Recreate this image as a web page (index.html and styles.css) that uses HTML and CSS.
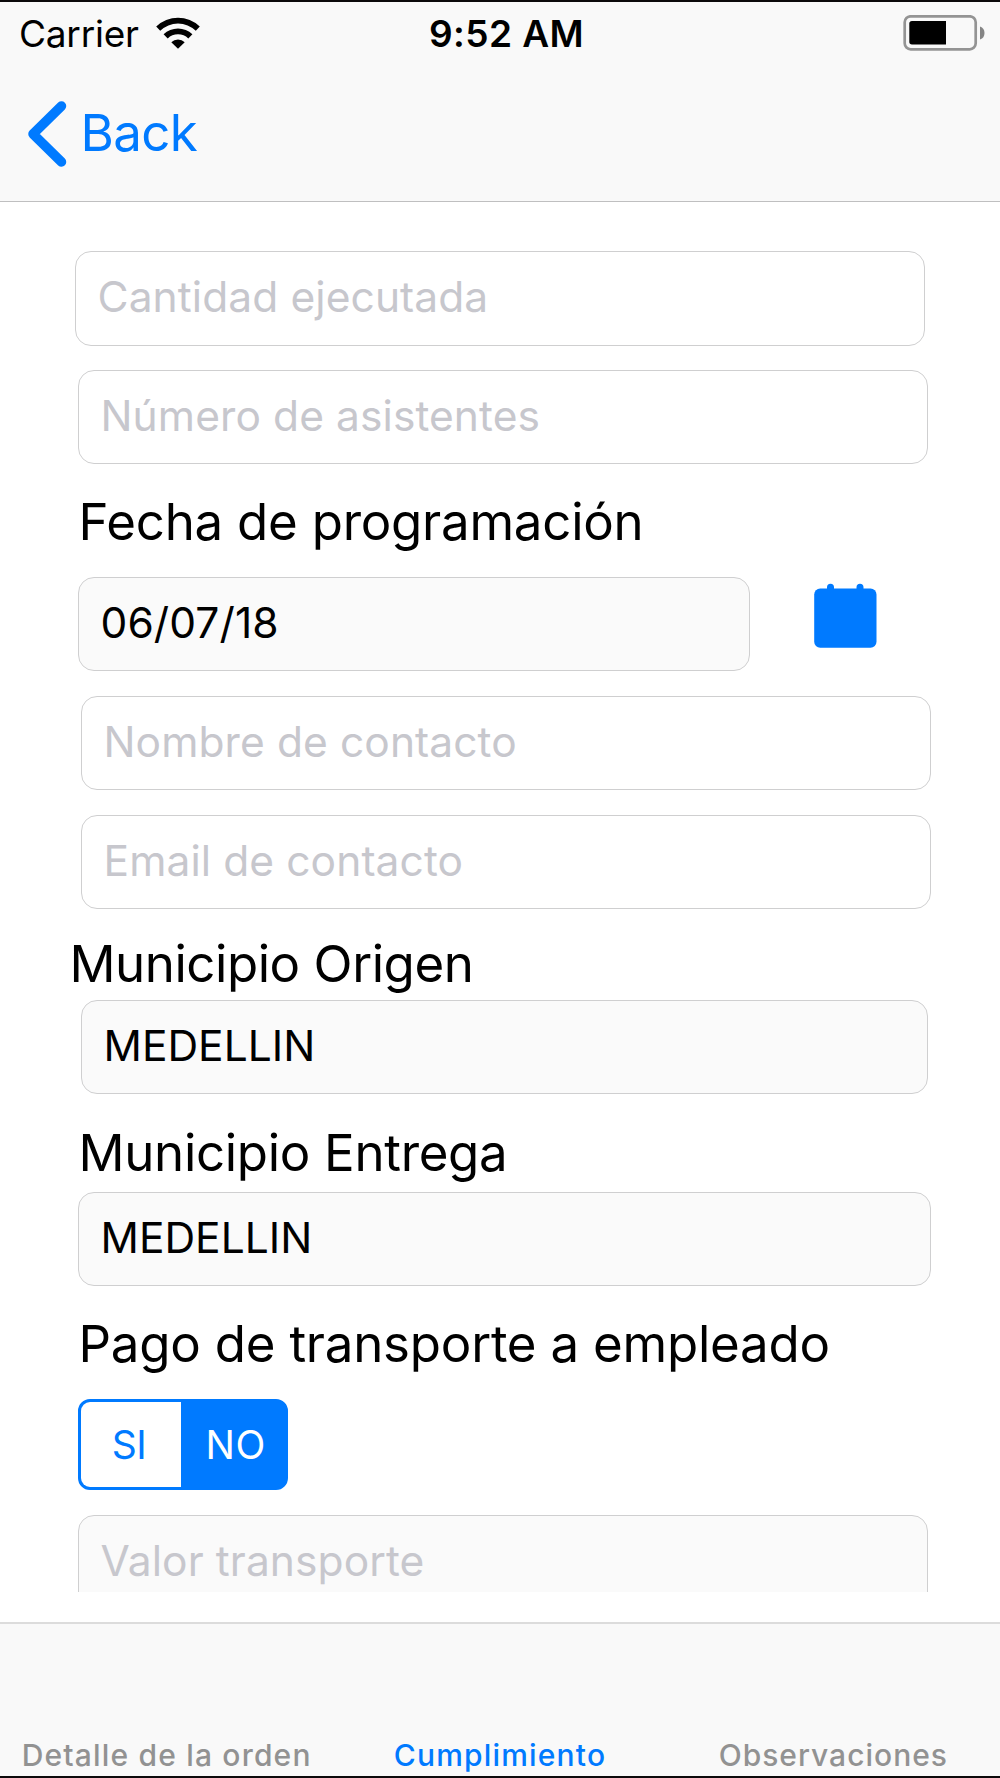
FILE: index.html
```html
<!DOCTYPE html>
<html lang="es">
<head>
<meta charset="utf-8">
<title>Cumplimiento</title>
<link rel="stylesheet" href="styles.css">
</head>
<body>
<div class="screen">
  <header class="top">
    <div class="status">
      <div class="status-left">
        <span class="carrier">Carrier</span>
        <svg class="wifi" width="44" height="32" viewBox="0 0 44 32">
          <path d="M22 31.800 15.300 25.200A9.500 9.500 0 0 1 28.700 25.200Z"/>
          <path d="M7.600 17.300A20.700 20.700 0 0 1 36.400 17.300L32.300 21.500A14.700 14.700 0 0 0 11.700 21.500Z"/>
          <path d="M.2 9.600A31.500 31.500 0 0 1 43.800 9.600L39.800 13.800A25.500 25.500 0 0 0 4.200 13.800Z"/>
        </svg>
      </div>
      <span class="time">9:52 AM</span>
      <svg class="battery" width="82" height="36" viewBox="0 0 82 36">
        <rect class="shell" x="1.700" y="1.300" width="71" height="33" rx="6"/>
        <path d="M9 6H43V29.500H9Q6.300 29.500 6.300 26.800V8.700Q6.300 6 9 6Z"/>
        <path class="nub" d="M77 11.500Q81.500 13 81.500 18T77 24.500Z"/>
      </svg>
    </div>
    <div class="nav">
      <svg class="chevron" width="40" height="66" viewBox="0 0 40 66"><path d="M34.500 5 6 33 34.500 61"/></svg>
      <span class="back">Back</span>
    </div>
  </header>

  <main class="form">
    <div class="field cantidad">Cantidad ejecutada</div>
    <div class="field asistentes">Número de asistentes</div>
    <div class="label fecha">Fecha de programación</div>
    <div class="date-row">
      <div class="field filled date">06/07/18</div>
      <svg class="calendar" width="64" height="66" viewBox="0 0 64 66">
        <rect x="1.200" y="5.500" width="62.300" height="59.300" rx="6"/>
        <path d="M14 7V4.300A3.500 3.500 0 0 1 21 4.300V7ZM43.500 7V4.300A3.500 3.500 0 0 1 50.500 4.300V7Z"/>
      </svg>
    </div>
    <div class="field nombre">Nombre de contacto</div>
    <div class="field email">Email de contacto</div>
    <div class="label origen">Municipio Origen</div>
    <div class="field filled ciudad-origen">MEDELLIN</div>
    <div class="label entrega">Municipio Entrega</div>
    <div class="field filled ciudad-entrega">MEDELLIN</div>
    <div class="label pago">Pago de transporte a empleado</div>
    <div class="segmented"><span class="option">SI</span><span class="option selected">NO</span></div>
    <div class="field disabled">Valor transporte</div>
  </main>

  <nav class="tabs">
    <span class="tab">Detalle de la orden</span>
    <span class="tab active">Cumplimiento</span>
    <span class="tab last">Observaciones</span>
  </nav>
</div>
</body>
</html>
```
FILE: styles.css
```css
* { box-sizing: border-box; }

body {
  margin: 0;
  font-family: Inter, "Liberation Sans", sans-serif;
  color: #000;
}

.screen {
  display: flex;
  flex-direction: column;
  width: 1000px;
  height: 1778px;
  overflow: hidden;
  background: #fff;
  border-top: 2px solid #0c0a0b;
  border-bottom: 2px solid #0c0a0b;
}

svg { display: block; flex: none; }

/* Status and navigation bars */
.top {
  flex: none;
  height: 200px;
  background: #f9f9f9;
  border-bottom: 1px solid #bfbfc0;
}

.status {
  display: grid;
  grid-template-columns: 410px auto 1fr;
  padding: 10px 15px 0 19px;
  font-size: 37px;
  line-height: 44px;
  white-space: nowrap;
}

.status-left { display: flex; gap: 17.5px; }
.carrier { letter-spacing: -0.225px; }
.wifi { margin-top: 5px; }
.time { font-weight: 600; letter-spacing: 0.41px; }
.battery { justify-self: end; margin-top: 3px; }
.shell { fill: none; stroke: #949494; stroke-width: 2.7; }
.nub { fill: #858585; }

.nav {
  display: flex;
  padding: 46px 0 0 26.5px;
  color: #007aff;
}

.chevron { margin-top: -1px; }

.chevron path {
  fill: none;
  stroke: #007aff;
  stroke-width: 9.5;
  stroke-linecap: round;
  stroke-linejoin: round;
}

.back {
  margin: 1px 0 0 14px;
  font-size: 51px;
  line-height: 60px;
  letter-spacing: -0.6px;
}

/* Scrolling form */
.form {
  flex: none;
  height: 1390px;
  padding: 49px 0 0 78px;
  overflow: hidden;
}

.field {
  width: 850px;
  height: 94px;
  padding-left: 21.5px;
  border: 1px solid #cfcfd0;
  border-radius: 16px;
  background: #fff;
  color: #c7c7cd;
  font-size: 42.5px;
  line-height: 89px;
  letter-spacing: 0.09px;
  white-space: nowrap;
}

.filled { background: #fafafa; color: #000; }
.cantidad { height: 95px; margin-left: -3px; }
.asistentes { margin-top: 24px; }
.date-row { display: flex; gap: 63px; height: 95px; margin-top: 26px; }
.date { width: 672px; letter-spacing: 0.1px; }
.calendar { margin-top: 6px; fill: #007aff; }
.nombre { margin: 24px 0 0 3px; }
.email { margin: 25px 0 0 3px; }
.ciudad-origen { width: 847px; margin: 7px 0 0 3px; letter-spacing: 0; }
.ciudad-entrega { width: 853px; margin-top: 10px; letter-spacing: 0; }
.disabled { margin-top: 25px; background: #fafafa; }

.label {
  padding-left: 0.5px;
  font-size: 51px;
  line-height: 61px;
  height: 60px;
  white-space: nowrap;
}

.fecha { margin-top: 27px; letter-spacing: -0.25px; }
.origen { margin: 24px 0 0 -9px; letter-spacing: -0.46px; }
.entrega { margin-top: 28px; letter-spacing: -0.31px; }
.pago { margin-top: 27px; letter-spacing: -0.23px; }

.segmented {
  display: flex;
  width: 209.5px;
  height: 91px;
  margin-top: 26px;
  border: 3px solid #007aff;
  border-radius: 12px;
  background: #007aff;
  font-size: 39px;
  line-height: 85px;
  text-align: center;
}

.option {
  width: 100px;
  padding-right: 4px;
  border-radius: 9px 0 0 9px;
  background: #fff;
  color: #007aff;
  letter-spacing: -0.5px;
}

.selected {
  flex: 1;
  padding: 0 0 0 6px;
  border-radius: 0;
  background: none;
  color: #fff;
  letter-spacing: 0.6px;
}

/* Tab bar */
.tabs {
  display: grid;
  grid-template-columns: repeat(3, 1fr);
  align-items: end;
  flex: 1;
  margin-top: 30px;
  padding-bottom: 3px;
  border-top: 2px solid #dcdcdc;
  background: #f9f9f9;
  color: #929292;
  font-size: 30px;
  font-weight: 500;
  line-height: 36px;
  letter-spacing: 1.18px;
  text-align: center;
  white-space: nowrap;
}

.active { color: #007aff; }
.last { letter-spacing: 1px; }
```
